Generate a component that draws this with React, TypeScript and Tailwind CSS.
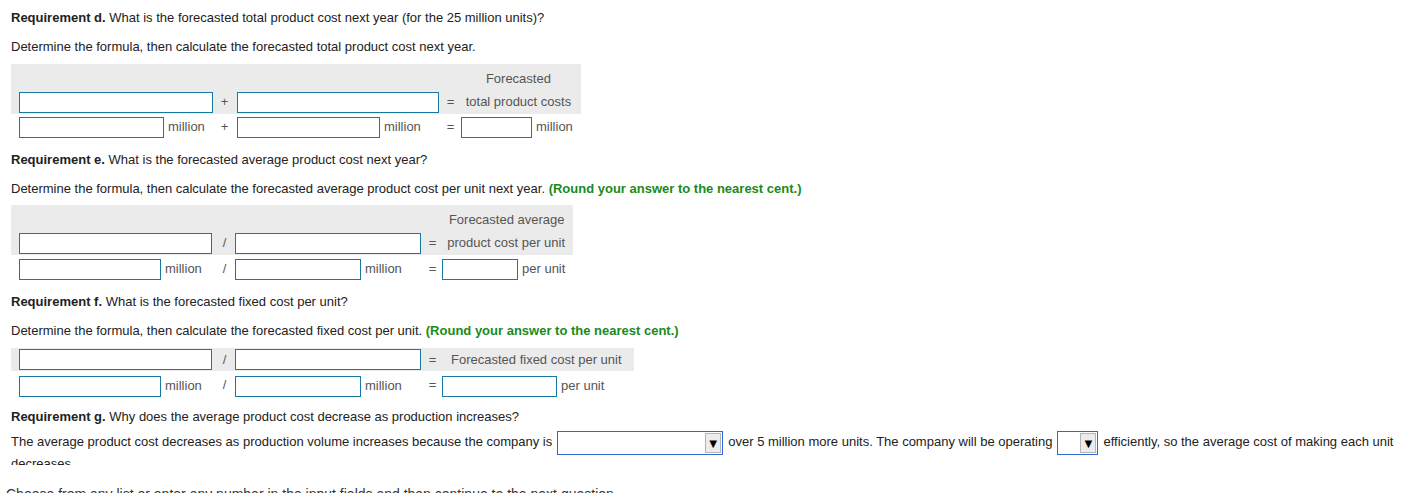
import type { ReactNode } from "react";

const Box = ({ w }: { w: string }) => (
  <span className={`inline-block h-[21px] ${w} border border-[#1679a3] bg-white align-middle`} />
);

const Op = ({ children }: { children: ReactNode }) => (
  <td className="w-[17px] px-0 text-center align-middle text-[#555]">{children}</td>
);

const Unit = ({ children }: { children: ReactNode }) => (
  <span className="ml-[4px] align-middle text-[#555]">{children}</span>
);

const Select = ({ w }: { w: string }) => (
  <span
    className={`mx-[5px] inline-flex h-[24px] ${w} items-stretch justify-end border border-[#3366d6] bg-white align-middle`}
  >
    <span className="my-[1px] mr-[1px] flex w-[16px] items-center justify-center border border-[#b5b5b5] bg-[#ececec] text-[13px] leading-none text-black">
      ▼
    </span>
  </span>
);

const Heading = ({ letter, text }: { letter: string; text: string }) => (
  <p className="h-[29px] leading-[20px] pt-[8px]">
    <span className="font-bold">Requirement {letter}.</span> {text}
  </p>
);

const Instruction = ({ text, round }: { text: string; round?: boolean }) => (
  <p className="mt-[8px] h-[20px] leading-[20px]">
    {text}
    {round && (
      <span className="font-bold text-[#1b8a1b]"> (Round your answer to the nearest cent.)</span>
    )}
  </p>
);

export default function App() {
  return (
    <div className="bg-white font-['Liberation_Sans',Arial,sans-serif] text-[13px] text-[#222]">
      <div className="h-[465px] overflow-hidden px-[11px]">
        {/* d */}
        <Heading letter="d" text="What is the forecasted total product cost next year (for the 25 million units)?" />
        <Instruction text="Determine the formula, then calculate the forecasted total product cost next year." />
        <table className="mt-[7px] border-collapse">
          <tbody>
            <tr className="h-[26px] bg-[#ebebeb]">
              <td className="w-[205px]" />
              <td />
              <td className="w-[209px]" />
              <td />
              <td className="pl-[5px] pr-[8px] pt-[4px] text-center text-[#555]">Forecasted</td>
            </tr>
            <tr className="h-[24px] bg-[#ebebeb]">
              <td className="pl-[8px]">
                <Box w="w-[194px]" />
              </td>
              <Op>+</Op>
              <td className="pl-[4px]">
                <Box w="w-[202px]" />
              </td>
              <Op>=</Op>
              <td className="pl-[5px] pr-[8px] text-center text-[#555]">total product costs</td>
            </tr>
            <tr className="h-[26px]">
              <td className="pl-[8px]">
                <Box w="w-[145px]" />
                <Unit>million</Unit>
              </td>
              <Op>+</Op>
              <td className="pl-[4px]">
                <Box w="w-[143px]" />
                <Unit>million</Unit>
              </td>
              <Op>=</Op>
              <td className="pl-[2px] pr-[8px]">
                <Box w="w-[71px]" />
                <Unit>million</Unit>
              </td>
            </tr>
          </tbody>
        </table>

        {/* e */}
        <div className="mt-[2px]">
          <Heading letter="e" text="What is the forecasted average product cost next year?" />
          <Instruction
            text="Determine the formula, then calculate the forecasted average product cost per unit next year."
            round
          />
        </div>
        <table className="mt-[6px] border-collapse">
          <tbody>
            <tr className="h-[26px] bg-[#ebebeb]">
              <td className="w-[205px]" />
              <td />
              <td className="w-[191px]" />
              <td />
              <td className="pl-[7px] pr-[8px] pt-[4px] text-center text-[#555]">Forecasted average</td>
            </tr>
            <tr className="h-[24px] bg-[#ebebeb]">
              <td className="pl-[8px]">
                <Box w="w-[193px]" />
              </td>
              <Op>/</Op>
              <td className="pl-[2px]">
                <Box w="w-[186px]" />
              </td>
              <Op>=</Op>
              <td className="pl-[6px] pr-[8px] text-center text-[#555]">product cost per unit</td>
            </tr>
            <tr className="h-[28px]">
              <td className="pl-[8px]">
                <Box w="w-[142px]" />
                <Unit>million</Unit>
              </td>
              <Op>/</Op>
              <td className="pl-[2px]">
                <Box w="w-[126px]" />
                <Unit>million</Unit>
              </td>
              <Op>=</Op>
              <td className="pl-[1px] pr-[8px]">
                <Box w="w-[76px]" />
                <Unit>per unit</Unit>
              </td>
            </tr>
          </tbody>
        </table>

        {/* f */}
        <div className="mt-[1px]">
          <Heading letter="f" text="What is the forecasted fixed cost per unit?" />
          <Instruction
            text="Determine the formula, then calculate the forecasted fixed cost per unit."
            round
          />
        </div>
        <table className="mt-[7px] border-collapse">
          <tbody>
            <tr className="h-[23px] bg-[#ebebeb]">
              <td className="w-[205px] pl-[8px]">
                <Box w="w-[193px]" />
              </td>
              <Op>/</Op>
              <td className="w-[191px] pl-[2px]">
                <Box w="w-[186px]" />
              </td>
              <Op>=</Op>
              <td className="pl-[10px] pr-[12px] text-[#555]">Forecasted fixed cost per unit</td>
            </tr>
            <tr className="h-[28px]">
              <td className="pl-[8px] pt-[2px]">
                <Box w="w-[142px]" />
                <Unit>million</Unit>
              </td>
              <Op>/</Op>
              <td className="pl-[2px] pt-[2px]">
                <Box w="w-[126px]" />
                <Unit>million</Unit>
              </td>
              <Op>=</Op>
              <td className="pl-[1px] pt-[2px]">
                <Box w="w-[115px]" />
                <Unit>per unit</Unit>
              </td>
            </tr>
          </tbody>
        </table>

        {/* g */}
        <div>
          <Heading letter="g" text="Why does the average product cost decrease as production increases?" />
          <p className="mt-[3px] leading-[18px]">
            The average product cost decreases as production volume increases because the company is
            <Select w="w-[166px]" />
            over 5 million more units. The company will be operating
            <Select w="w-[41px]" />
            efficiently, so the average cost of making each unit decreases.
          </p>
        </div>
      </div>
      <p className="mt-[21px] px-[6px] text-[14px] leading-[16px] text-[#333]">
        Choose from any list or enter any number in the input fields and then continue to the next
        question.
      </p>
    </div>
  );
}
